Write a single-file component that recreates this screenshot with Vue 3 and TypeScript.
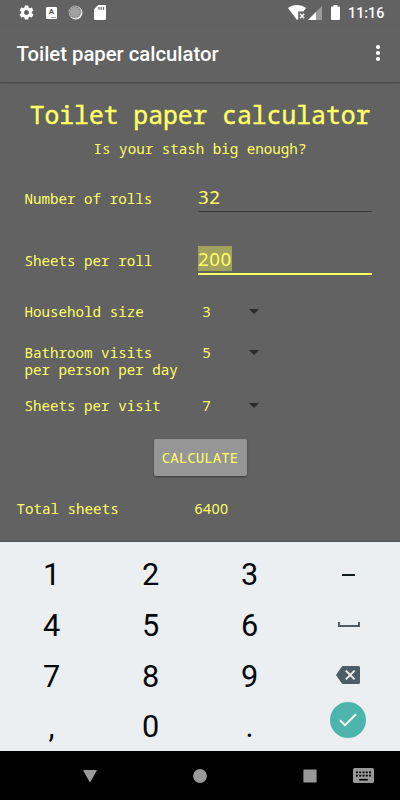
<script setup lang="ts">
import { ref } from 'vue'

interface Choice {
  id: string
  label: string
  value: number
}

const rolls = ref('32')
const sheetsPerRoll = ref('200')
const choices = ref<Choice[]>([
  { id: 'household', label: 'Household size', value: 3 },
  { id: 'visits', label: 'Bathroom visits\nper person per day', value: 5 },
  { id: 'sheets', label: 'Sheets per visit', value: 7 },
])
const total = ref(6400)

function calculate(): void {
  total.value = Number(rolls.value) * Number(sheetsPerRoll.value)
}

const keys: string[] = ['1', '2', '3', 'minus', '4', '5', '6', 'space', '7', '8', '9', 'delete', ',', '0', '.', 'done']
const perforations: number[] = [0, 30, 60, 90, 120, 150, 180, 210, 240, 270, 300, 330]
</script>

<template>
  <div class="screen">
    <header class="status">
      <svg class="ico gear" viewBox="0 0 24 24"><path fill="#fff" d="M19.43 12.98c.04-.32.07-.64.07-.98s-.03-.66-.07-.98l2.11-1.65c.19-.15.24-.42.12-.64l-2-3.46c-.12-.22-.39-.3-.61-.22l-2.49 1c-.52-.4-1.08-.73-1.69-.98l-.38-2.65C14.46 2.18 14.25 2 14 2h-4c-.25 0-.46.18-.49.42l-.38 2.65c-.61.25-1.17.59-1.69.98l-2.49-1c-.23-.09-.49 0-.61.22l-2 3.46c-.13.22-.07.49.12.64l2.11 1.65c-.04.32-.07.65-.07.98s.03.66.07.98l-2.11 1.65c-.19.15-.24.42-.12.64l2 3.46c.12.22.39.3.61.22l2.49-1c.52.4 1.08.73 1.69.98l.38 2.65c.03.24.24.42.49.42h4c.25 0 .46-.18.49-.42l.38-2.65c.61-.25 1.17-.59 1.69-.98l2.49 1c.23.09.49 0 .61-.22l2-3.46c.12-.22.07-.49-.12-.64l-2.11-1.65zM12 15.5c-1.93 0-3.5-1.57-3.5-3.5s1.57-3.5 3.5-3.5 3.5 1.57 3.5 3.5-1.57 3.5-3.5 3.5z" /></svg>
      <span class="abox"><span class="aletter">A</span><span class="adots"></span></span>
      <svg class="ico sync" viewBox="0 0 16 16">
        <circle cx="8.2" cy="8.2" r="7.2" fill="#f4f4f4" />
        <circle cx="7.4" cy="7.4" r="6.8" fill="#a2a2a2" />
        <path v-for="a in perforations" :key="a" d="M7.4 1.2v1.4" stroke="#777" stroke-width=".8" :transform="`rotate(${a} 7.4 7.4)`" />
      </svg>
      <svg class="ico sd" viewBox="0 0 12 15"><path fill="#fff" d="M4.2 0H11a1 1 0 0 1 1 1v13a1 1 0 0 1-1 1H1a1 1 0 0 1-1-1V4.2z" /><path stroke="#616161" stroke-width="1.2" d="M4.9 2v2.8M7.2 2v2.8M9.5 2v2.8" /></svg>
      <span class="spacer"></span>
      <svg class="ico wifi" viewBox="0 0 18 15"><path fill="#fff" d="M0 3.1C5-1 13-1 18 3.1L15.2 6.5H10.2V14.2L9 15z" /><path stroke="#fff" stroke-width="1.4" d="m12 8.8 4.2 4.4m0-4.4L12 13.2" /></svg>
      <svg class="ico signal" viewBox="0 0 14 14"><path fill="#9b9b9b" d="M0 14 14 0v14z" /><path fill="#fff" d="M0 14 8 6v8z" /></svg>
      <svg class="ico battery" viewBox="0 0 9 15"><path fill="#fff" d="M2.5 0h4v1.5H8a1 1 0 0 1 1 1V14a1 1 0 0 1-1 1H1a1 1 0 0 1-1-1V2.5a1 1 0 0 1 1-1h1.5z" /></svg>
      <span class="time">11:16</span>
    </header>

    <div class="appbar">
      <span class="apptitle">Toilet paper calculator</span>
      <svg class="more" viewBox="0 0 6 18"><circle cx="3" cy="3" r="2.1" /><circle cx="3" cy="9" r="2.1" /><circle cx="3" cy="15" r="2.1" /></svg>
    </div>

    <main class="content">
      <h1 class="heading">Toilet paper calculator</h1>
      <p class="tagline">Is your stash big enough?</p>

      <div class="row">
        <span class="label">Number of rolls</span>
        <div class="field"><span class="entry">{{ rolls }}</span></div>
      </div>
      <div class="row">
        <span class="label">Sheets per roll</span>
        <div class="field active"><span class="entry selected">{{ sheetsPerRoll }}</span></div>
      </div>
      <div v-for="c in choices" :key="c.id" class="choice" :class="c.id">
        <span class="label">{{ c.label }}</span>
        <span class="value">{{ c.value }}</span>
        <svg class="caret" viewBox="0 0 10 5"><path d="M0 0h10L5 5z" /></svg>
      </div>

      <button class="calc" type="button" @click="calculate">CALCULATE</button>

      <div class="total">
        <span class="total-label">Total sheets</span>
        <span class="total-value">{{ total }}</span>
      </div>
    </main>

    <div class="keyboard">
      <div v-for="k in keys" :key="k" class="key">
        <span v-if="k === 'minus'" class="minus"></span>
        <span v-else-if="k === 'space'" class="space"></span>
        <svg v-else-if="k === 'delete'" class="delete" viewBox="0 0 24 18"><path fill="#4d5d66" d="M7 0h15.500a1.500 1.500 0 0 1 1.500 1.500v15a1.500 1.500 0 0 1-1.500 1.500H7c-.6 0-1-.3-1.300-.7L0 9 5.700.7C6 .3 6.400 0 7 0z" /><path fill="none" stroke="#eceff1" stroke-width="2" d="m9.800 4.600 8.800 8.800m0-8.800-8.800 8.800" /></svg>
        <span v-else-if="k === 'done'" class="done">
          <svg class="tick" viewBox="0 0 18 14"><path fill="none" stroke="#fff" stroke-width="2" d="m1 7.200 5 5L17 1.200" /></svg>
        </span>
        <span v-else>{{ k }}</span>
      </div>
    </div>

    <nav class="navbar">
      <svg class="nav-ico" viewBox="0 0 14 14"><path d="M.7 1h12.600a.5.5 0 0 1 .4.800L7.400 13a.5.5 0 0 1-.8 0L.3 1.800A.5.5 0 0 1 .7 1z" /></svg>
      <svg class="nav-ico" viewBox="0 0 14 14"><circle cx="7" cy="7" r="6.900" /></svg>
      <svg class="nav-ico" viewBox="0 0 14 14"><rect x=".4" y=".5" width="13.200" height="13" rx=".6" /></svg>
      <svg class="nav-kbd" viewBox="0 0 21 15">
        <rect width="21" height="15" rx="1.600" />
        <path stroke="#000" stroke-width="1.900" stroke-dasharray="2 1.250" d="M3 4.400h15M3 7.600h15" />
        <path stroke="#000" stroke-width="1.600" d="M6.200 11.700h8.600" />
      </svg>
    </nav>
  </div>
</template>

<style>
body {
  margin: 0;
  background: #000;
}
</style>

<style scoped>
.screen {
  width: 400px;
  height: 800px;
  display: flex;
  flex-direction: column;
  overflow: hidden;
  background: #626262;
  color: #ffff66;
  font: 14.2px/17px "Droid Sans Mono", "Noto Sans Mono", "Noto Sans Mono CJK SC", "DejaVu Sans Mono", monospace;
}
svg {
  display: block;
  flex: none;
}
.status {
  height: 25px;
  flex: none;
  display: flex;
  align-items: center;
  box-sizing: border-box;
  padding: 0 16px 0 18px;
  color: #fff;
}
.gear { width: 17px; height: 17px; }
.abox {
  width: 11px;
  height: 12px;
  margin-left: 11px;
  border-radius: 1px;
  background: #fff;
  color: #555;
  display: flex;
  flex-direction: column;
  align-items: center;
}
.aletter { font: bold 8px/10px Roboto, sans-serif; }
.adots { width: 5px; height: 1px; margin-left: 4px; background: #999; }
.sync { width: 15px; height: 15px; margin-left: 11px; }
.sd { width: 12px; height: 15px; margin-left: 11px; }
.spacer { flex: 1; }
.wifi { width: 18px; height: 15px; }
.signal { width: 14px; height: 14px; margin-left: 2px; }
.battery { width: 9px; height: 15px; margin-left: 9px; }
.time { width: 36px; margin: 2px 0 0 8px; font: 500 14.300px/25px Roboto, sans-serif; white-space: nowrap; }
.appbar {
  height: 57px;
  flex: none;
  display: flex;
  align-items: center;
  justify-content: space-between;
  box-sizing: border-box;
  padding: 0 19.500px 0 16.500px;
  color: #fff;
  box-shadow: 0 1px 2px rgba(0, 0, 0, 0.3);
}
.apptitle { font: 500 20.300px/24px Roboto, sans-serif; }
.more { width: 6px; height: 18px; margin-bottom: 1px; fill: #fff; }
.content {
  height: 459px;
  flex: none;
  display: flex;
  flex-direction: column;
  box-sizing: border-box;
  padding-top: 16px;
}
.heading {
  margin: 0;
  font-size: 24.700px;
  line-height: 34px;
  font-weight: 400;
  -webkit-text-stroke: 0.45px #ffff66;
  text-align: center;
  white-space: nowrap;
}
.tagline { margin: 0; height: 35px; line-height: 34px; text-align: center; }
.row {
  height: 62px;
  flex: none;
  display: flex;
  align-items: center;
  padding-left: 24.500px;
}
.label { width: 173.500px; flex: none; white-space: pre; }
.field {
  width: 173.500px;
  height: 27px;
  display: flex;
  align-items: flex-start;
  border-bottom: 1px solid #3b3b3b;
}
.field.active { margin-top: 1px; border-bottom: 2px solid #ffff66; }
.entry,
.value,
.total-value {
  font-family: "Droid Sans Mono", "Noto Sans", sans-serif;
  letter-spacing: 0.028em;
}
.entry { font-size: 18.700px; line-height: 25px; }
.selected { background: #a2a25f; }
.choice {
  display: flex;
  align-items: flex-start;
  padding-left: 24.500px;
}
.household { padding-top: 12px; height: 41px; box-sizing: border-box; }
.visits { padding-top: 12px; height: 53px; box-sizing: border-box; }
.sheets { padding-top: 12px; height: 47px; box-sizing: border-box; }
.value { width: 46.500px; padding-left: 4.500px; }
.caret { width: 10px; height: 5px; margin-top: 6px; fill: #2b2b2b; }
.calc {
  width: 93px;
  height: 37px;
  margin: 7px auto 0 153.500px;
  padding: 0;
  flex: none;
  border: 0;
  border-radius: 2px;
  background: #969696;
  box-shadow: 0 1px 2px rgba(0, 0, 0, 0.4);
  color: inherit;
  font: inherit;
}
.total { display: flex; padding: 24px 0 0 16.500px; }
.total-label { width: 178px; }
.keyboard {
  height: 210px;
  flex: none;
  display: grid;
  grid-template-columns: repeat(4, 99px);
  grid-template-rows: repeat(4, 50.700px);
  box-sizing: border-box;
  padding: 8px 0 0 2px;
  border-top: 1px solid #505356;
  background: #eceff1;
  color: #02090d;
  font: 30.700px/50px Roboto, sans-serif;
}
.key { display: flex; align-items: center; justify-content: center; }
.minus { width: 13px; height: 2px; margin-bottom: 1px; background: #101b20; }
.space {
  width: 18px;
  height: 3px;
  margin-bottom: 3px;
  border: 2px solid #4d5d66;
  border-top: 0;
}
.delete { width: 24px; height: 18px; margin: 0 1px 3px 0; }
.done {
  width: 36px;
  height: 36px;
  margin: 0 1px 14px 0;
  border-radius: 50%;
  background: #4db6ac;
  display: flex;
  align-items: center;
  justify-content: center;
}
.tick { width: 18px; height: 14px; }
.navbar {
  height: 49px;
  flex: none;
  display: flex;
  align-items: center;
  box-sizing: border-box;
  padding-left: 83px;
  background: #000;
}
.nav-ico { width: 14px; height: 14px; margin-right: 96px; fill: #999; }
.nav-ico:nth-child(3) { margin-right: 36px; }
.nav-kbd { width: 21px; height: 15px; fill: #999; }
</style>
